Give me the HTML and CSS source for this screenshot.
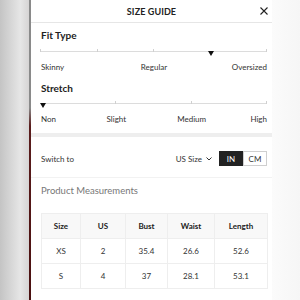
FILE: index.html
```html
<!DOCTYPE html>
<html lang="en">
<head>
  <meta charset="UTF-8" />
  <meta name="viewport" content="width=device-width, initial-scale=1.0"/>
  <title>Size Guide</title>
  <link rel="stylesheet" href="styles.css">
</head>
<body>
  <div class="screen">
    <div class="backdrop"></div>
    <div class="edge"></div>

    <div class="sheet">
      <header class="sheet-head">
        <span class="title">SIZE GUIDE</span>
        <a class="close" href="#">
          <svg width="8" height="8" viewBox="0 0 8 8"><path d="M0.5 0.5 L7.5 7.5 M7.5 0.5 L0.5 7.5" stroke="#222" stroke-width="1.1" fill="none"/></svg>
        </a>
      </header>

      <section class="scale">
        <h3>Fit Type</h3>
        <div class="track">
          <span class="tick" style="left:0%"></span>
          <span class="tick" style="left:25%"></span>
          <span class="tick" style="left:50%"></span>
          <span class="tick" style="left:100%"></span>
          <span class="marker" style="left:75%"></span>
        </div>
        <div class="labels labels-3">
          <span>Skinny</span><span>Regular</span><span>Oversized</span>
        </div>
      </section>

      <section class="scale">
        <h3>Stretch</h3>
        <div class="track">
          <span class="tick" style="left:33.33%"></span>
          <span class="tick" style="left:66.66%"></span>
          <span class="tick" style="left:100%"></span>
          <span class="marker" style="left:0.8%"></span>
        </div>
        <div class="labels labels-4">
          <span>Non</span><span>Slight</span><span>Medium</span><span>High</span>
        </div>
      </section>

      <div class="band"></div>

      <div class="switch-row">
        <span class="switch-label">Switch to</span>
        <span class="region">US Size
          <svg width="6" height="4" viewBox="0 0 6 4"><path d="M0.5 0.5 L3 3 L5.5 0.5" stroke="#333" stroke-width="1" fill="none"/></svg>
        </span>
        <div class="units">
          <a class="unit active" href="#">IN</a>
          <a class="unit" href="#">CM</a>
        </div>
      </div>

      <div class="measure">
        <h4>Product Measurements</h4>
        <table class="size-table">
          <colgroup>
            <col style="width:39px"><col style="width:45px"><col style="width:42px"><col style="width:47px"><col style="width:53px">
          </colgroup>
          <thead>
            <tr><th>Size</th><th>US</th><th>Bust</th><th>Waist</th><th>Length</th></tr>
          </thead>
          <tbody>
            <tr><td>XS</td><td>2</td><td>35.4</td><td>26.6</td><td>52.6</td></tr>
            <tr><td>S</td><td>4</td><td>37</td><td>28.1</td><td>53.1</td></tr>
          </tbody>
        </table>
      </div>
    </div>

    <div class="side"></div>
  </div>
</body>
</html>
```

FILE: styles.css
```css
body {
  margin: 0;
  font-family: 'Lato', 'Liberation Sans', sans-serif;
  background-color: #ffffff;
  color: #222;
}

.screen {
  display: flex;
  width: 300px;
  height: 300px;
  overflow: hidden;
}

.backdrop {
  width: 29px;
  flex-shrink: 0;
  background: linear-gradient(to right, #c4c4c4, #e6e6e6 70%, #d6d4d4);
}

.edge {
  width: 2px;
  flex-shrink: 0;
  background: linear-gradient(to bottom, #8a8a8a 0, #8a8a8a 36%, #5a1c1c 42%, #4a1010 100%);
}

.sheet {
  width: 241px;
  flex-shrink: 0;
  background: #fff;
}

.side {
  flex: 1;
  background: linear-gradient(to right, #fbfbfb, #f6f6f6);
}

/* header */
.sheet-head {
  height: 22px;
  border-bottom: 1px solid #e6e6e6;
  display: flex;
  align-items: center;
  justify-content: center;
  position: relative;
}

.title {
  font-size: 9px;
  font-weight: bold;
  letter-spacing: 0.1px;
  color: #222;
}

.close {
  position: absolute;
  right: 4px;
  top: 7px;
  display: flex;
}

/* sliders */
.scale {
  padding: 0 5px 0 10px;
}

.scale h3 {
  margin: 0;
  font-size: 10px;
  font-weight: bold;
  line-height: 12px;
  color: #222;
}

.scale:first-of-type h3 {
  padding-top: 6px;
}

.track {
  position: relative;
  height: 1px;
  background: #dcdcdc;
  margin-top: 10px;
}

.scale + .scale .track {
  margin-top: 9px;
}

.tick {
  position: absolute;
  top: -2px;
  width: 1px;
  height: 3px;
  background: #d0d0d0;
  margin-left: -1px;
}

.marker {
  position: absolute;
  top: 0;
  margin-left: -3px;
  width: 0;
  height: 0;
  border-left: 3px solid transparent;
  border-right: 3px solid transparent;
  border-top: 5px solid #111;
}

.labels {
  display: grid;
  margin-top: 10px;
  font-size: 8px;
  line-height: 10px;
  color: #333;
}

.labels span {
  justify-self: center;
}

.labels span:first-child {
  justify-self: start;
}

.labels span:last-child {
  justify-self: end;
}

.labels-3 {
  grid-template-columns: 1fr 2fr 1fr;
}

.labels-4 {
  grid-template-columns: 1fr 2fr 2fr 1fr;
}

.scale + .scale h3 {
  margin-top: 10px;
}

.band {
  height: 4px;
  background: #eeeeee;
  margin-top: 9px;
}

/* unit switch */
.switch-row {
  display: flex;
  align-items: center;
  padding: 14px 5px 11px 10px;
  border-bottom: 1px solid #f2f2f2;
  font-size: 8px;
  color: #333;
}

.switch-label {
  flex: 1;
}

.region {
  display: flex;
  align-items: center;
  gap: 4px;
  margin-right: 7px;
}

.units {
  display: flex;
}

.unit {
  width: 24px;
  height: 15px;
  box-sizing: border-box;
  display: flex;
  align-items: center;
  justify-content: center;
  text-decoration: none;
  color: #333;
  border: 1px solid #cfcfcf;
}

.unit.active {
  background: #222;
  border-color: #222;
  color: #fff;
}

/* measurements */
.measure {
  padding: 7px 5px 0 10px;
}

.measure h4 {
  margin: 0;
  font-size: 9.5px;
  font-weight: normal;
  line-height: 12px;
  color: #777;
}

.size-table {
  margin-top: 16px;
  width: 226px;
  border-collapse: collapse;
  table-layout: fixed;
  font-size: 8px;
  color: #333;
}

.size-table th,
.size-table td {
  height: 24px;
  padding: 0;
  text-align: center;
  border: 1px solid #eeeeee;
}

.size-table th {
  background: #f8f8f8;
  font-weight: bold;
  color: #222;
}
```
